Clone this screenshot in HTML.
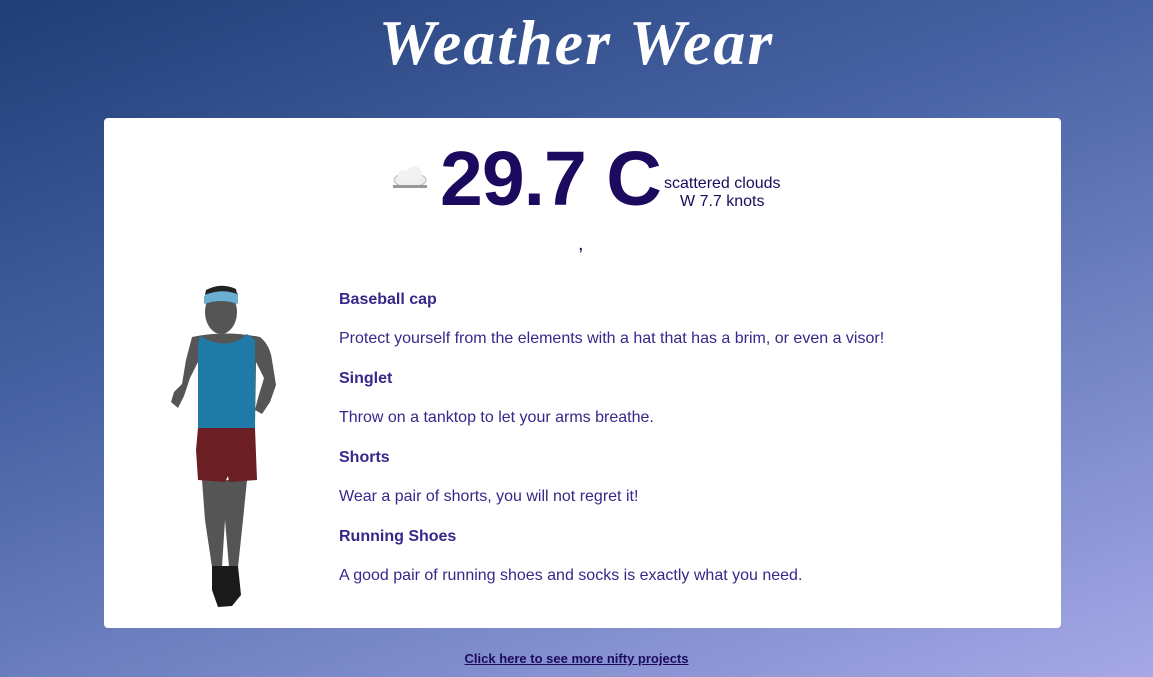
<!DOCTYPE html>
<html><head><meta charset="utf-8"><style>
html,body{margin:0;padding:0;}
body{width:1153px;height:677px;overflow:hidden;position:relative;font-family:"Liberation Sans",sans-serif;
background:linear-gradient(160deg,#1f3d77 0%,#4a65a6 40%,#7e8ccb 75%,#a6a8e8 100%);}
h1{position:absolute;left:0;width:1153px;top:6px;margin:0;text-align:center;color:#fff;font-family:"Liberation Serif",serif;font-style:italic;font-weight:bold;font-size:64px;letter-spacing:2px;}
.card{position:absolute;left:104px;top:118px;width:957px;height:510px;background:#fff;border-radius:4px;}
.temp{position:absolute;left:440px;top:134px;font-size:77px;font-weight:bold;color:#1c0a5e;letter-spacing:-1px;line-height:90px;}
.desc{position:absolute;left:664px;top:175px;font-size:16px;color:#1c0a5e;text-align:center;line-height:18px;}
.comma{position:absolute;left:578px;top:233px;font-size:20px;color:#1c0a5e;}
.items{position:absolute;left:339px;top:291px;color:#35288a;font-size:16px;}
.items b{display:block;height:39px;}
.items p{margin:0;height:40px;}
.link{position:absolute;left:0;width:1153px;top:651px;text-align:center;font-size:13px;font-weight:bold;color:#1c0a5e;text-decoration:underline;}
</style></head><body>
<h1>Weather Wear</h1>
<div class="card"></div>
<svg style="position:absolute;left:0;top:0" width="1153" height="677">
<g>
<ellipse cx="410" cy="180" rx="16" ry="7" fill="#eee" stroke="#bbb"/>
<circle cx="404" cy="176" r="6" fill="#f2f2f2"/><circle cx="414" cy="174" r="8" fill="#f2f2f2"/>
<rect x="393" y="185" width="34" height="3" fill="#999"/>
</g>
<g fill="#555">
<ellipse cx="221" cy="312" rx="16" ry="22"/>
<path d="M192 337 Q225 330 260 337 Q270 345 272 360 L276 385 L270 402 L262 414 L255 410 L258 398 L264 378 L256 362 L255 428 L198 428 L198 362 L190 378 L184 396 L178 408 L171 402 L174 392 L182 384 L186 360 Z"/>
<path d="M202 480 L247 480 L243 520 L238 567 L229 567 L225 520 L222 567 L212 567 L205 520 Z"/>
</g>
<path d="M200 336 Q228 352 247 334 L255 340 L255 428 L198 428 L198 345 Z" fill="#1f7aa8"/>
<path d="M198 428 L255 428 L257 480 L229 482 L228 476 L225 482 L198 480 L196 450 Z" fill="#6b1f25"/>
<path d="M212 566 L238 566 L241 595 L232 606 L218 607 L212 590 Z" fill="#1b1a1b"/>
<path d="M204 296 Q221 284 238 293 L238 304 Q221 298 204 304 Z" fill="#6aaed4"/>
<path d="M206 290 Q221 282 236 289 L237 294 Q221 288 205 295 Z" fill="#222"/>
</svg>
<div class="temp">29.7 C</div>
<div class="desc">scattered clouds<br>W 7.7 knots</div>
<div class="comma">,</div>
<div class="items">
<b>Baseball cap</b><p>Protect yourself from the elements with a hat that has a brim, or even a visor!</p>
<b>Singlet</b><p>Throw on a tanktop to let your arms breathe.</p>
<b>Shorts</b><p>Wear a pair of shorts, you will not regret it!</p>
<b>Running Shoes</b><p>A good pair of running shoes and socks is exactly what you need.</p>
</div>
<div class="link">Click here to see more nifty projects</div>
</body></html>
